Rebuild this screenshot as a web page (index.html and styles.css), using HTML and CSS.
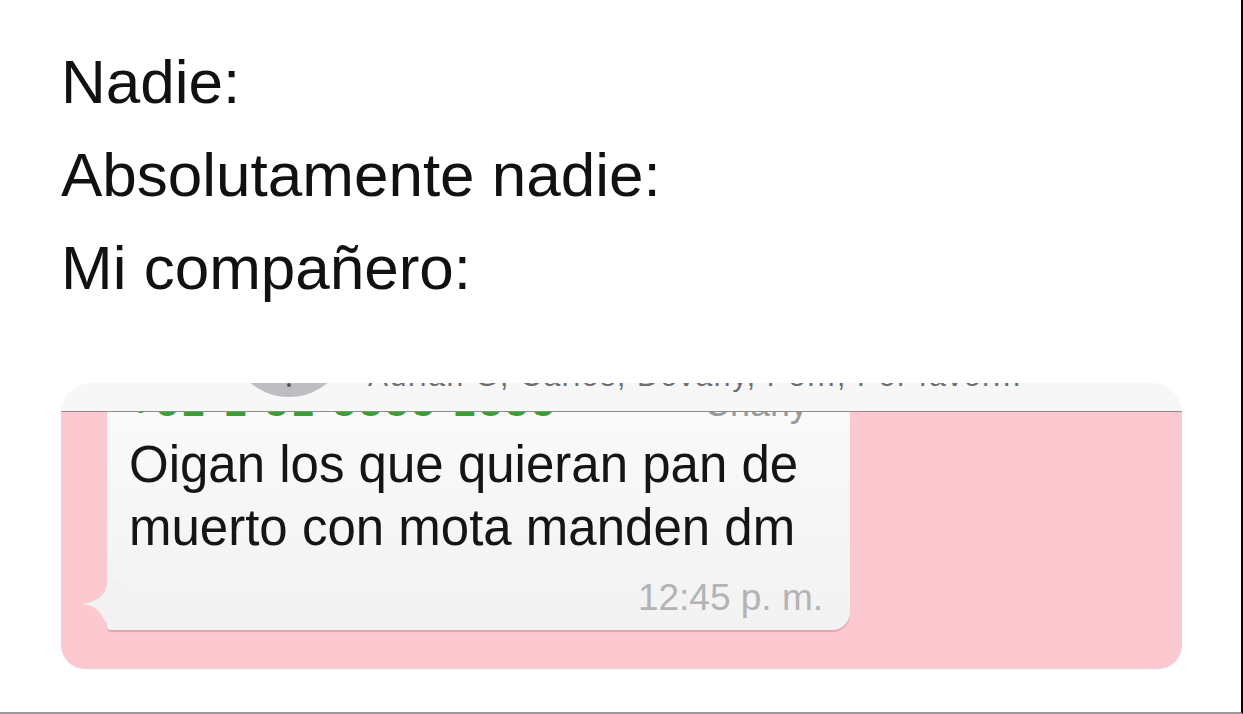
FILE: index.html
```html
<!DOCTYPE html>
<html lang="es">
<head>
<meta charset="utf-8">
<title>Nadie</title>
<link rel="stylesheet" href="styles.css">
</head>
<body>
<div class="frame">
  <div class="lines">
    <div>Nadie:</div>
    <div>Absolutamente nadie:</div>
    <div>Mi compañero:</div>
  </div>
  <div class="panel">
    <div class="header">
      <div class="header-row">
        <div class="avatar"><span class="avatar-dot"></span></div>
        <div class="title">Adrián G, Carlos, Dovany, Pe..., Por favor...</div>
      </div>
    </div>
    <div class="chat">
      <div class="bubble">
        <svg class="tail" width="40" height="50" viewBox="0 0 40 50" aria-hidden="true">
          <path d="M25 0 C25 13 19 21 0 24 C9 25 15 28 19 34 C23 43 29 50 40 50 L40 0 Z" fill="#f2f2f2"/>
        </svg>
        <div class="sender"><span class="phone">+52 1 81 8888 1888</span><span class="name">~Charly</span></div>
        <div class="message">Oigan los que quieran pan de<br>muerto con mota manden dm</div>
        <div class="time">12:45 p. m.</div>
      </div>
    </div>
  </div>
</div>
</body>
</html>
```
FILE: styles.css
```css
html, body {
  margin: 0;
  padding: 0;
  background: #ffffff;
}

.frame {
  width: 1243px;
  height: 714px;
  box-sizing: border-box;
  border-right: 2px solid #000000;
  border-bottom: 2px solid #9a9a9a;
  padding: 35px 0 0 61px;
  font-family: "Liberation Sans", Arial, sans-serif;
  overflow: hidden;
}

.lines {
  font-size: 62px;
  line-height: 93px;
  color: #111111;
}

.panel {
  margin-top: 69px;
  width: 1121px;
  border-radius: 30px 30px 24px 24px;
  overflow: hidden;
}

.header {
  height: 29px;
  box-sizing: border-box;
  border-bottom: 1px solid #8c8c8c;
  background: #f7f7f7;
  overflow: hidden;
}

.header-row {
  display: flex;
  align-items: flex-end;
  height: 120px;
  margin-top: -92px;
  padding-left: 168px;
}

.avatar {
  position: relative;
  flex: 0 0 120px;
  width: 120px;
  height: 120px;
  border-radius: 50%;
  background: #bdbdc2;
  margin-bottom: 14px;
}

.avatar-dot {
  position: absolute;
  left: 58px;
  bottom: 10px;
  width: 4px;
  height: 4px;
  border-radius: 50%;
  background: #555555;
}

.title {
  margin-left: 19px;
  margin-bottom: 21px;
  font-size: 30px;
  line-height: 28px;
  color: #6e6e6e;
  white-space: nowrap;
  letter-spacing: 1.7px;
}

.chat {
  height: 257px;
  background: #fdc9d1;
  overflow: hidden;
}

.bubble {
  position: relative;
  margin: -37px 0 0 46px;
  width: 743px;
  box-sizing: border-box;
  padding: 7px 27px 12px 22px;
  border-radius: 18px;
  border-bottom-left-radius: 4px;
  background: linear-gradient(#fbfbfb, #f2f2f2);
  box-shadow: 0 2px 1px rgba(150, 110, 115, 0.35);
}

.tail {
  position: absolute;
  left: -25px;
  bottom: 0;
  display: block;
}

.sender {
  display: flex;
  align-items: baseline;
  height: 40px;
  font-size: 40px;
  line-height: 40px;
  white-space: nowrap;
}

.phone {
  color: #3b9e34;
  font-weight: bold;
  letter-spacing: 4px;
}

.name {
  margin-left: 125px;
  color: #9a9a9a;
  font-size: 36px;
}

.message {
  margin-top: 11px;
  font-size: 51px;
  line-height: 63px;
  color: #151515;
}

.time {
  margin-top: 19px;
  text-align: right;
  font-size: 37px;
  line-height: 40px;
  color: #b3b3b3;
}
```
